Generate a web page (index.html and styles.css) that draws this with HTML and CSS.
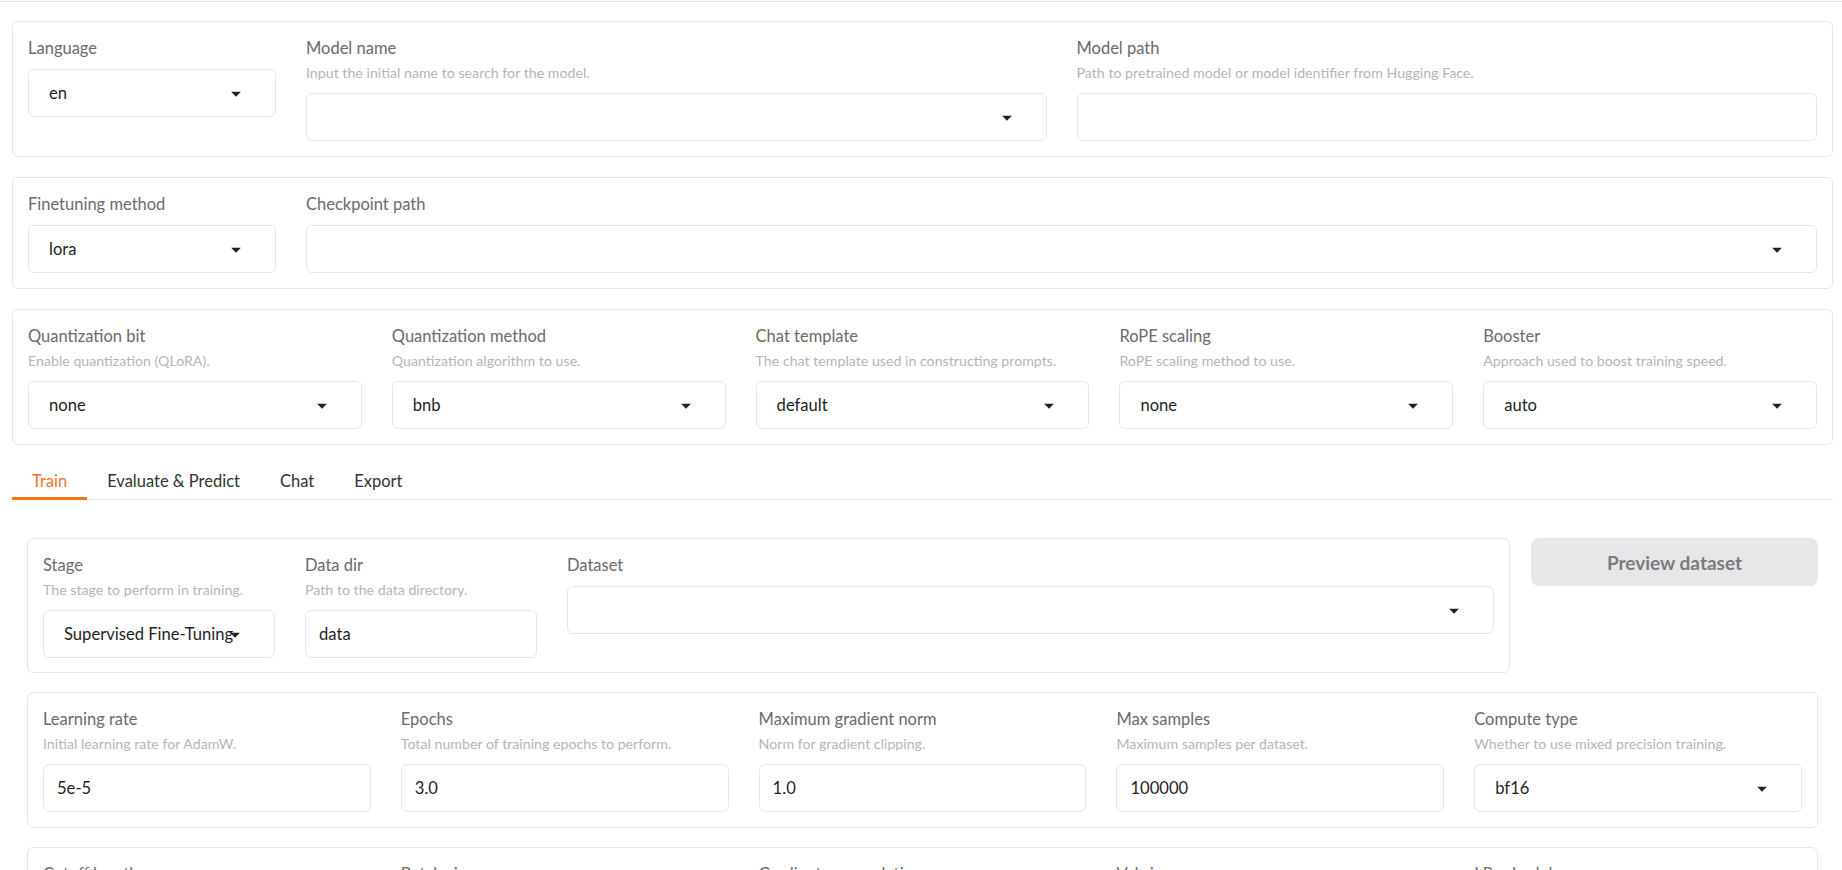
FILE: index.html
```html
<!DOCTYPE html>
<html lang="en">
<head>
    <meta charset="UTF-8">
    <meta name="viewport" content="width=device-width, initial-scale=1.0">
    <title>LLaMA Board</title>
    <link rel="stylesheet" href="styles.css">
</head>
<body>

<div class="top-rule"></div>

<main class="app">

    <!-- model -->
    <section class="block">
        <div class="field w-lang">
            <div class="head"><div class="label">Language</div></div>
            <div class="input dropdown">en<svg class="arrow" viewBox="0 0 18 18"><path d="M5 8l4 4 4-4z"/></svg></div>
        </div>
        <div class="field grow">
            <div class="head">
                <div class="label">Model name</div>
                <div class="info">Input the initial name to search for the model.</div>
            </div>
            <div class="input dropdown"><svg class="arrow" viewBox="0 0 18 18"><path d="M5 8l4 4 4-4z"/></svg></div>
        </div>
        <div class="field grow">
            <div class="head">
                <div class="label">Model path</div>
                <div class="info">Path to pretrained model or model identifier from Hugging Face.</div>
            </div>
            <div class="input"></div>
        </div>
    </section>

    <section class="block">
        <div class="field w-lang">
            <div class="head"><div class="label">Finetuning method</div></div>
            <div class="input dropdown">lora<svg class="arrow" viewBox="0 0 18 18"><path d="M5 8l4 4 4-4z"/></svg></div>
        </div>
        <div class="field grow">
            <div class="head"><div class="label">Checkpoint path</div></div>
            <div class="input dropdown"><svg class="arrow" viewBox="0 0 18 18"><path d="M5 8l4 4 4-4z"/></svg></div>
        </div>
    </section>

    <section class="block">
        <div class="field grow">
            <div class="head">
                <div class="label">Quantization bit</div>
                <div class="info">Enable quantization (QLoRA).</div>
            </div>
            <div class="input dropdown">none<svg class="arrow" viewBox="0 0 18 18"><path d="M5 8l4 4 4-4z"/></svg></div>
        </div>
        <div class="field grow">
            <div class="head">
                <div class="label">Quantization method</div>
                <div class="info">Quantization algorithm to use.</div>
            </div>
            <div class="input dropdown">bnb<svg class="arrow" viewBox="0 0 18 18"><path d="M5 8l4 4 4-4z"/></svg></div>
        </div>
        <div class="field grow">
            <div class="head">
                <div class="label">Chat template</div>
                <div class="info">The chat template used in constructing prompts.</div>
            </div>
            <div class="input dropdown">default<svg class="arrow" viewBox="0 0 18 18"><path d="M5 8l4 4 4-4z"/></svg></div>
        </div>
        <div class="field grow">
            <div class="head">
                <div class="label">RoPE scaling</div>
                <div class="info">RoPE scaling method to use.</div>
            </div>
            <div class="input dropdown">none<svg class="arrow" viewBox="0 0 18 18"><path d="M5 8l4 4 4-4z"/></svg></div>
        </div>
        <div class="field grow">
            <div class="head">
                <div class="label">Booster</div>
                <div class="info">Approach used to boost training speed.</div>
            </div>
            <div class="input dropdown">auto<svg class="arrow" viewBox="0 0 18 18"><path d="M5 8l4 4 4-4z"/></svg></div>
        </div>
    </section>

    <nav class="tabs">
        <div class="tab active">Train</div>
        <div class="tab">Evaluate &amp; Predict</div>
        <div class="tab">Chat</div>
        <div class="tab">Export</div>
    </nav>

    <div class="tab-panel">

        <div class="train-row">
            <section class="block">
                <div class="field w-stage">
                    <div class="head">
                        <div class="label">Stage</div>
                        <div class="info">The stage to perform in training.</div>
                    </div>
                    <div class="input dropdown">Supervised Fine-Tuning<svg class="arrow" viewBox="0 0 18 18"><path d="M5 8l4 4 4-4z"/></svg></div>
                </div>
                <div class="field w-stage">
                    <div class="head">
                        <div class="label">Data dir</div>
                        <div class="info">Path to the data directory.</div>
                    </div>
                    <div class="input">data</div>
                </div>
                <div class="field grow">
                    <div class="head"><div class="label">Dataset</div></div>
                    <div class="input dropdown"><svg class="arrow" viewBox="0 0 18 18"><path d="M5 8l4 4 4-4z"/></svg></div>
                </div>
            </section>
            <button class="preview">Preview dataset</button>
        </div>

        <section class="block">
            <div class="field grow">
                <div class="head">
                    <div class="label">Learning rate</div>
                    <div class="info">Initial learning rate for AdamW.</div>
                </div>
                <div class="input">5e-5</div>
            </div>
            <div class="field grow">
                <div class="head">
                    <div class="label">Epochs</div>
                    <div class="info">Total number of training epochs to perform.</div>
                </div>
                <div class="input">3.0</div>
            </div>
            <div class="field grow">
                <div class="head">
                    <div class="label">Maximum gradient norm</div>
                    <div class="info">Norm for gradient clipping.</div>
                </div>
                <div class="input">1.0</div>
            </div>
            <div class="field grow">
                <div class="head">
                    <div class="label">Max samples</div>
                    <div class="info">Maximum samples per dataset.</div>
                </div>
                <div class="input">100000</div>
            </div>
            <div class="field grow">
                <div class="head">
                    <div class="label">Compute type</div>
                    <div class="info">Whether to use mixed precision training.</div>
                </div>
                <div class="input dropdown">bf16<svg class="arrow" viewBox="0 0 18 18"><path d="M5 8l4 4 4-4z"/></svg></div>
            </div>
        </section>

        <section class="block">
            <div class="field grow">
                <div class="head">
                    <div class="label">Cutoff length</div>
                    <div class="info">Max tokens in input sequence.</div>
                </div>
                <div class="input">1024</div>
            </div>
            <div class="field grow">
                <div class="head">
                    <div class="label">Batch size</div>
                    <div class="info">Number of samples processed on each GPU.</div>
                </div>
                <div class="input">2</div>
            </div>
            <div class="field grow">
                <div class="head">
                    <div class="label">Gradient accumulation</div>
                    <div class="info">Number of steps for gradient accumulation.</div>
                </div>
                <div class="input">8</div>
            </div>
            <div class="field grow">
                <div class="head">
                    <div class="label">Val size</div>
                    <div class="info">Proportion of data in the dev set.</div>
                </div>
                <div class="input">0</div>
            </div>
            <div class="field grow">
                <div class="head">
                    <div class="label">LR scheduler</div>
                    <div class="info">Name of the learning rate scheduler.</div>
                </div>
                <div class="input dropdown">cosine<svg class="arrow" viewBox="0 0 18 18"><path d="M5 8l4 4 4-4z"/></svg></div>
            </div>
        </section>

    </div>
</main>

</body>
</html>
```

FILE: styles.css
```css
body {
    margin: 0;
    background: #fff;
    color: #1f1f1f;
    font-family: "Lato", "Noto Sans", sans-serif;
}

.top-rule {
    height: 1px;
    margin-top: 1px;
    background: #e5e7eb;
}

.app {
    padding: 19px 9px 40px 12px;
    display: flex;
    flex-direction: column;
    gap: 20px;
}

/* panels with a thin grey frame */
.block {
    display: flex;
    align-items: flex-start;
    gap: 30px;
    padding: 15px;
    border: 1px solid #e5e7eb;
    border-radius: 6px;
    background: #fff;
}

.field {
    display: flex;
    flex-direction: column;
    min-width: 0;
}

.grow {
    flex: 1 1 0;
}

.w-lang {
    width: 248px;
    flex: none;
}

.w-stage {
    width: 232px;
    flex: none;
}

.head {
    margin-bottom: 10px;
}

.label {
    font-size: 16.5px;
    line-height: 22px;
    color: #6b6b6b;
}

.info {
    margin-top: 4px;
    font-size: 14.2px;
    line-height: 20px;
    color: #b5b5b5;
}

.input {
    position: relative;
    height: 48px;
    box-sizing: border-box;
    padding: 0 13px;
    display: flex;
    align-items: center;
    border: 1px solid #e5e7eb;
    border-radius: 6px;
    font-size: 16.6px;
    color: #1f1f1f;
    white-space: nowrap;
}

.dropdown {
    padding-left: 20px;
}

.arrow {
    position: absolute;
    right: 28px;
    top: 50%;
    width: 22px;
    height: 22px;
    margin-top: -11px;
    fill: #222;
}

/* tabs */
.tabs {
    display: flex;
    border-bottom: 1px solid #e5e7eb;
    height: 34px;
}

.tab {
    padding: 0 20px;
    font-size: 16.5px;
    line-height: 32px;
    color: #333;
}

.tab.active {
    color: #f97316;
    border-bottom: 3px solid #f97316;
    margin-bottom: -1px;
}

.tab-panel {
    margin-top: 18px;
    padding: 0 15px;
    display: flex;
    flex-direction: column;
    gap: 19px;
}

.train-row {
    display: flex;
    align-items: flex-start;
    gap: 21px;
}

.train-row .block {
    flex: 1;
    padding-bottom: 14px;
}

.preview {
    width: 287px;
    height: 48px;
    flex: none;
    border: none;
    border-radius: 8px;
    background: #e7e7e9;
    color: #7b7b7b;
    font-family: inherit;
    font-size: 19px;
    font-weight: 700;
}
```
